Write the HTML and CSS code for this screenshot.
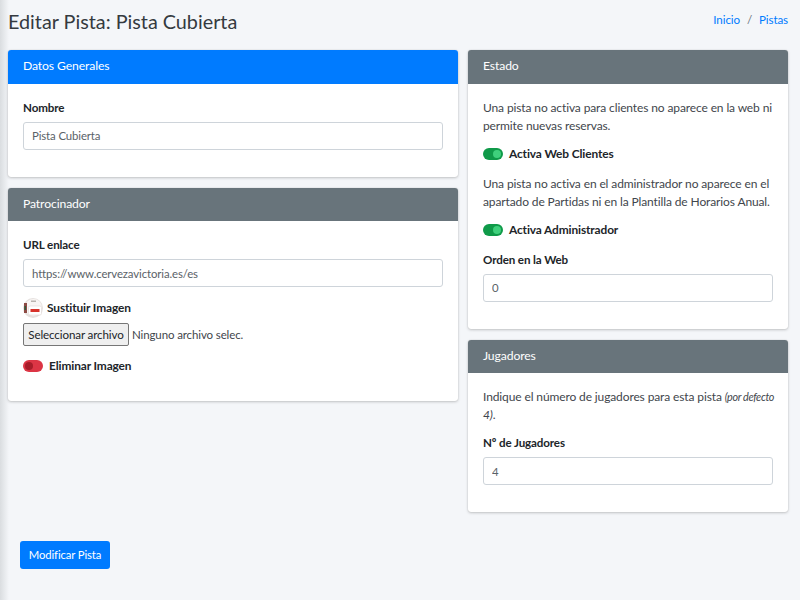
FILE: index.html
```html
<!DOCTYPE html>
<html lang="es">
<head>
<meta charset="utf-8">
<title>Editar Pista</title>
<link rel="stylesheet" href="styles.css">
</head>
<body>
<div class="page">
  <header class="top">
    <h1 class="title">Editar Pista: Pista Cubierta</h1>
    <nav class="crumbs"><a href="#">Inicio</a><span class="sep">/</span><a href="#">Pistas</a></nav>
  </header>
  <div class="columns">
    <div class="col">
      <section class="card">
        <h2 class="card-head primary">Datos Generales</h2>
        <div class="card-body first">
          <label class="lbl">Nombre</label>
          <input class="field" value="Pista Cubierta">
        </div>
      </section>
      <section class="card">
        <h2 class="card-head">Patrocinador</h2>
        <div class="card-body sponsor">
          <label class="lbl">URL enlace</label>
          <input class="field" value="https://www.cervezavictoria.es/es">
          <div class="thumb-row">
            <svg class="thumb" viewBox="0 0 20 20" aria-hidden="true">
              <circle cx="10" cy="10" r="10" fill="#e6e1df"/>
              <circle cx="10.5" cy="9.5" r="8.5" fill="#f8f5f4"/>
              <rect x="1" y="5" width="3" height="10" fill="#8d4a44"/>
              <rect x="1.5" y="8" width="1.5" height="4" fill="#2f5a3c"/>
              <rect x="8" y="2.5" width="5" height="1.5" fill="#b9b4b0"/>
              <rect x="5.5" y="8" width="13" height="9" rx="1.5" fill="#fff" stroke="#d9cfcc" stroke-width=".5"/>
              <rect x="7.5" y="11" width="9" height="3" fill="#d8322b"/>
            </svg>
            <span class="lbl inline">Sustituir Imagen</span>
          </div>
          <div class="file-row">
            <button class="file-btn" type="button">Seleccionar archivo</button>
            <span class="file-name">Ninguno archivo selec.</span>
          </div>
          <div class="switch-row del">
            <span class="switch off"></span><span class="lbl inline">Eliminar Imagen</span>
          </div>
        </div>
      </section>
    </div>
    <div class="col">
      <section class="card">
        <h2 class="card-head">Estado</h2>
        <div class="card-body">
          <p class="txt">Una pista no activa para clientes no aparece en la web ni permite nuevas reservas.</p>
          <div class="switch-row">
            <span class="switch on"></span><span class="lbl inline">Activa Web Clientes</span>
          </div>
          <p class="txt">Una pista no activa en el administrador no aparece en el apartado de Partidas ni en la Plantilla de Horarios Anual.</p>
          <div class="switch-row">
            <span class="switch on"></span><span class="lbl inline">Activa Administrador</span>
          </div>
          <label class="lbl">Orden en la Web</label>
          <input class="field" value="0">
        </div>
      </section>
      <section class="card">
        <h2 class="card-head">Jugadores</h2>
        <div class="card-body">
          <p class="txt players">Indique el número de jugadores para esta pista <em class="note">(por defecto</em> <em>4)</em>.</p>
          <label class="lbl">Nº de Jugadores</label>
          <input class="field" value="4">
        </div>
      </section>
    </div>
  </div>
  <button class="submit" type="button">Modificar Pista</button>
</div>
</body>
</html>
```
FILE: styles.css
```css
* { box-sizing: border-box; }
html, body { margin: 0; height: 100%; }
body {
  background: #f4f6f9;
  color: #212529;
  font-family: Lato, sans-serif;
  font-size: 12px;
  letter-spacing: -.12px;
  line-height: 18px;
  overflow: hidden;
}
.page {
  min-height: 600px;
  padding: 0 12px 0 8px;
  background: linear-gradient(to right, #dadde0 0, #f4f6f9 9px) no-repeat left top / 12px 100%;
}
.top {
  display: flex;
  justify-content: space-between;
  align-items: center;
  height: 50px;
  padding-bottom: 9px;
}
.title { margin: 0; font-size: 19.8px; font-weight: 400; letter-spacing: 0; line-height: 26px; color: #343a40; }
.crumbs { display: flex; color: #6c757d; font-size: 11.6px; margin-bottom: 2px; }
.crumbs a { color: #007bff; text-decoration: none; }
.sep { padding: 0 7px; }
.columns {
  display: grid;
  grid-template-columns: 450px 320px;
  column-gap: 10px;
  align-items: start;
}
.col { display: flex; flex-direction: column; gap: 11px; }
.card {
  background: #fff;
  border-radius: 3px;
  box-shadow: 0 0 1px rgba(0,0,0,.2), 0 1px 3px rgba(0,0,0,.2);
}
.card-head {
  margin: 0;
  height: 33.5px;
  padding: 0 15px 1px;
  display: flex;
  align-items: center;
  font-size: 12.2px;
  font-weight: 400;
  color: #fff;
  background: #68747b;
  border-radius: 3px 3px 0 0;
}
.card-head.primary { background: #007bff; }
.card-body { padding: 15px 15px 27px; display: flex; flex-direction: column; align-items: stretch; }
.lbl { font-size: 11.6px; font-weight: 700; color: #212529; display: block; margin-bottom: 5px; }
.lbl.inline { font-size: 11.9px; margin-bottom: 0; }
.field {
  height: 28px;
  width: 100%;
  padding: 0 8px;
  border: 1px solid #ced4da;
  border-radius: 3px;
  font: inherit;
  font-size: 11.4px;
  letter-spacing: inherit;
  color: #5a6268;
  background: #fff;
}
.txt { margin: 0 0 10px; color: #3f464c; }
.players { margin-right: -4px; }
.note { font-size: 10.8px; letter-spacing: -.35px; }
.switch-row { display: flex; align-items: center; gap: 6px; height: 18px; margin-bottom: 12px; }
.switch {
  position: relative;
  width: 20px;
  height: 12px;
  border-radius: 6px;
}
.switch::after {
  content: "";
  position: absolute;
  top: 2px;
  width: 8px;
  height: 8px;
  border-radius: 50%;
}
.switch.on { background: #0f9a49; }
.switch.on::after { right: 2px; background: #3fd07c; }
.switch.off { background: #dc3545; }
.switch.off::after { left: 2px; background: #a71d2a; }
.thumb-row { display: flex; align-items: center; gap: 4px; margin-top: 11px; height: 20px; }
.thumb { width: 20px; height: 20px; }
.file-row { display: flex; align-items: center; gap: 3px; margin-top: 5px; height: 23px; }
.file-btn {
  height: 23px;
  width: 106px;
  padding: 0;
  font: inherit;
  font-size: 11.6px;
  letter-spacing: inherit;
  white-space: nowrap;
  color: #212529;
  background: #efefef;
  border: 1px solid #767676;
  border-radius: 2px;
}
.file-name { color: #3f464c; font-size: 11.5px; }
.del { margin-top: 11px; margin-bottom: 0; }
.sponsor { padding-bottom: 26px; }
.submit {
  display: block;
  margin: 29px 0 0 12px;
  width: 90px;
  height: 28px;
  padding: 0;
  border: 0;
  border-radius: 3px;
  background: #007bff;
  color: #fff;
  font: inherit;
  font-size: 11.3px;
  letter-spacing: inherit;
}
```
